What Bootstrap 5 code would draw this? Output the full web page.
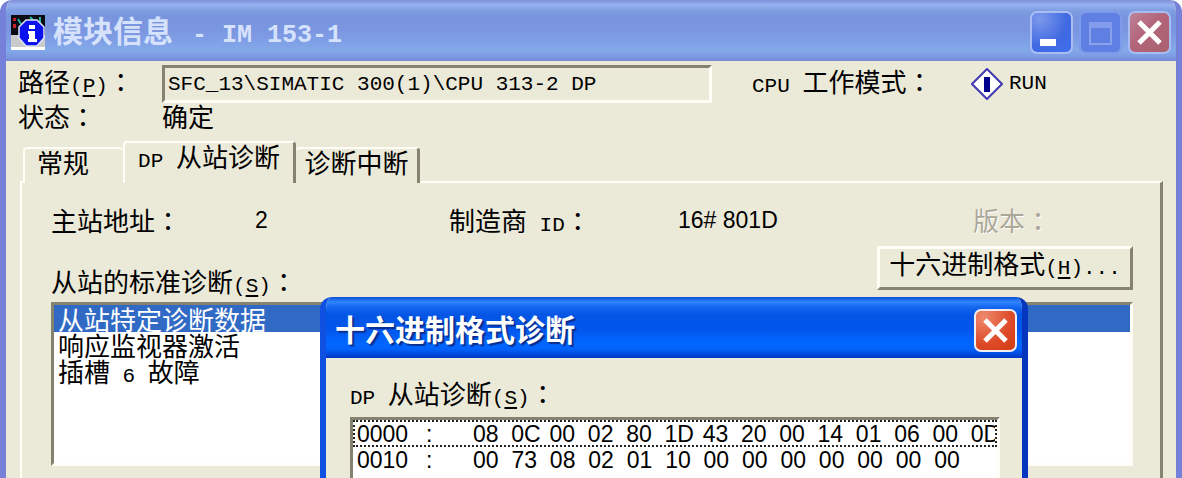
<!DOCTYPE html>
<html lang="zh-CN">
<head>
<meta charset="utf-8">
<meta name="viewport" content="width=device-width, initial-scale=1">
<title>模块信息 - IM 153-1</title>
<link href="https://cdn.jsdelivr.net/npm/bootstrap@5.3.0/dist/css/bootstrap.min.css" rel="stylesheet">
<style>
  :root { --face: #ebe9d8; --shade: #85826f; --lite: #fffef6; }
  body { background: #fff; color: #000; font: 26px/26px "Noto Sans CJK SC", sans-serif; }
  .en { font-family: "Liberation Mono", monospace; font-size: 21px; white-space: pre; }
  .num { font-family: "Liberation Sans", sans-serif; font-size: 23px; }
  .cn { font-family: "Noto Sans CJK TC", sans-serif; }
  u { text-underline-offset: 3px; text-decoration-thickness: 2px; }

  .win { min-height: 100vh; background: var(--face); border: 0 solid #7581d8; border-width: 0 6px; border-radius: 12px 12px 0 0; }
  .win-bar { height: 61px; margin: 0 -6px; padding: 4px 11px 0 11px; border-radius: 12px 12px 0 0;
    background: linear-gradient(#7f8fd8 0, #97b3f0 5px, #7f9fe2 10px, #7895de 16px, #7b96e0 30px, #7f9ee6 40px, #83a9e8 50px, #7e9ce4 56px, #7488d6 61px); }
  .bar-text { font-size: 30px; line-height: 36px; font-weight: 700; white-space: pre; }
  .bar-text .en { font-size: 25px; margin-left: 4px; }
  .win-bar .bar-text { color: #d6e2fb; }
  .caps { gap: 6px; }
  .cap { width: 43px; height: 43px; padding: 0; border: 2px solid #a9bdf3; border-radius: 7px; display: flex; }
  .cap svg { width: 100%; height: 100%; }
  .cap-min { background: radial-gradient(circle at 20% 15%, #7d99ec, #4069e2 60%, #3f70ee); }
  .cap-max { background: #5f7fe2; border-color: #7f9aea; }
  .cap-x { background: linear-gradient(135deg, #bd8297, #b36579 45%, #a9616f); }

  .path-label { width: 144px; }
  .path-box { height: 38px; padding: 0 3px; border: 3px solid; border-color: var(--shade) var(--lite) var(--lite) var(--shade); border-radius: 0; background: transparent; color: #000; margin-right: 40px; }
  .mode-label { width: 219px; }
  .mode-value { width: 205px; }
  .run-icon { width: 32px; height: 32px; margin-right: 6px; }

  .tabs { padding-left: 17px; height: 41px; margin-top: 13px; position: relative; z-index: 1; }
  .tab { height: 36px; padding: 0 12px 8px; border: 0 solid var(--lite); border-top-width: 2px; border-radius: 4px 4px 0 0; background: var(--face); color: #000; font: inherit; white-space: nowrap; }
  .tab-first { border-left-width: 2px; width: 100px; text-align: left; }
  .tab-on { height: 42px; width: 173px; padding-bottom: 9px; border-left-width: 2px; border-right: 3px solid var(--shade); }
  .tab-last { width: 124px; padding: 0 8px 8px; border-right: 3px solid var(--shade); }
  .pane { margin: -2px 13px 0 14px; padding: 24px 27px 0 29px; border: 2px solid var(--lite); border-right: 3px solid var(--shade); border-bottom: 0; }
  .facts { display: grid; grid-template-columns: 204px 194px 229px 1fr 160px; }
  .ver { color: #aca899; text-shadow: 1px 1px 0 #fff; }
  .hex-btn { width: 256px; height: 44px; padding: 0 0 4px; border: 3px solid; border-color: var(--lite) var(--shade) var(--shade) var(--lite); border-radius: 0; background: var(--face); color: #000; font: inherit; margin: 7px 0 10px; white-space: nowrap; }
  .sunk { background: #fff; border: 3px solid; border-color: var(--shade) var(--lite) var(--lite) var(--shade); border-radius: 0; }
  .diag-list { height: 164px; margin-top: 2px; }
  .diag-list button { border: 0; background: transparent; text-align: left; padding: 0 4px; height: 26px; color: #000; font: inherit; }
  .diag-list button.sel { background: #316ac5; color: #fff; height: 27px; }

  /* Modal lying over the module window */
  .dlg { position: absolute; top: 297px; left: 314px; right: 148px; bottom: 0; overflow: hidden; background: var(--face); border: 0 solid #0f50e0; border-width: 0 6px; border-right-color: #0437bd; border-radius: 12px 12px 0 0; }
  .dlg-bar { height: 61px; margin: 0 -6px; padding: 5px 11px 0 15px;
    background: linear-gradient(#0a50d4 0, #2f86ff 5px, #1567f0 10px, #0455e4 18px, #0256ec 32px, #0166ff 46px, #0263fc 52px, #003fd0 59px, #0038c0 61px); }
  .dlg-bar .bar-text { color: #fff; text-shadow: 2px 2px 1px #0a2f90; }
  .dlg .cap { border-color: #f3eef2; }
  .dlg .cap-x { background: radial-gradient(circle at 20% 15%, #ee8a6c, #dd4a28 60%, #d23c10); }
  .dlg-main { padding: 22px 22px 0 24px; }
  .dlg-label { height: 34px; }
  .hex-list { height: 150px; margin-top: 3px; }
  .hex-row { height: 26px; padding-left: 4px; overflow: hidden; }
  .hex-row.focus { border: 2px dotted #222; height: 27px; padding-left: 2px; }
  .hex-addr { width: 69px; flex: none; }
  .hex-sep { width: 47px; flex: none; }
  .hex-bytes { display: grid; grid-template-columns: repeat(14, 1fr); margin-right: -14px; }
</style>
</head>
<body>
<main class="win position-relative overflow-hidden d-flex flex-column">
  <header class="win-bar d-flex align-items-center">
    <svg width="34" height="35" viewBox="0 0 34 35" aria-hidden="true">
      <path d="M0 0h34v20H0z" fill="#080b12"/><path d="M0 20h34v14H0z" fill="#c9cac9"/><path d="M0 32h34v3H0z" fill="#fff"/>
      <path d="M2 3h3v3H2zm0 6h3v4H2z" fill="#c4202c"/><path d="M7 4l3 5m9-7l4 4m6-4v7" stroke="#23b4a8" stroke-width="2"/>
      <path d="M15 5h11l7 7v11l-7 8H15l-7-8V12z" fill="#0b12ef" stroke="#dfe5f6" stroke-width="1.5"/>
      <path d="M18 10h6v4h-6zm-1 6h7v8h2v3h-9v-3h1v-5h-1z" fill="#fff"/>
    </svg>
    <h1 class="bar-text mb-0 ms-2">模块信息<span class="en"> - IM 153-1</span></h1>
    <div class="caps d-flex ms-auto">
      <button class="cap cap-min" type="button" aria-label="最小化"><svg viewBox="0 0 39 39"><path d="M8 26h16v7H8z" fill="#fff"/></svg></button>
      <button class="cap cap-max" type="button" aria-label="最大化" disabled><svg viewBox="0 0 39 39"><path d="M9 10h21v21H9z" fill="none" stroke="#8aa2ee" stroke-width="2"/><path d="M8 9h23v6H8z" fill="#839cec"/></svg></button>
      <button class="cap cap-x" type="button" aria-label="关闭"><svg viewBox="0 0 39 39"><path d="M9 9l21 21M30 9L9 30" stroke="#fff" stroke-width="5"/></svg></button>
    </div>
  </header>

  <div class="d-flex align-items-center ps-2 ms-1 pt-1">
    <label class="path-label" for="path">路径<span class="en">(<u>P</u>)</span><span class="cn" lang="zh-TW">：</span></label>
    <input class="path-box en flex-grow-1" id="path" readonly value="SFC_13\SIMATIC 300(1)\CPU 313-2 DP">
    <span class="mode-label"><span class="en">CPU </span>工作模式<span class="cn" lang="zh-TW">：</span></span>
    <span class="mode-value d-flex align-items-center">
      <svg class="run-icon" viewBox="0 0 32 32" aria-hidden="true"><path d="M16 1l15 15-15 15L1 16z" fill="#fff" stroke="#4038b0" stroke-width="2"/><path d="M13 9h6v15h-6z" fill="#00008c"/></svg><span class="en">RUN</span>
    </span>
  </div>
  <div class="d-flex ps-2 ms-1"><span class="path-label">状态<span class="cn" lang="zh-TW">：</span></span><span>确定</span></div>

  <nav class="tabs d-flex align-items-end" role="tablist">
    <button class="tab tab-first" type="button" role="tab">常规</button>
    <button class="tab tab-on" type="button" role="tab" aria-selected="true"><span class="en">DP </span>从站诊断</button>
    <button class="tab tab-last" type="button" role="tab">诊断中断</button>
  </nav>

  <section class="pane flex-grow-1">
    <div class="facts">
      <span>主站地址<span class="cn" lang="zh-TW">：</span></span><span class="num">2</span>
      <span>制造商<span class="en"> ID</span><span class="cn" lang="zh-TW">：</span></span><span class="num">16# 801D</span>
      <span class="ver">版本<span class="cn" lang="zh-TW">：</span></span>
    </div>
    <div class="d-flex justify-content-between">
      <span class="align-self-end" id="std">从站的标准诊断<span class="en">(<u>S</u>)</span><span class="cn" lang="zh-TW">：</span></span>
      <button class="hex-btn" type="button">十六进制格式<span class="en">(<u>H</u>)...</span></button>
    </div>
    <div class="diag-list sunk d-flex flex-column" role="listbox" aria-labelledby="std">
      <button class="sel" type="button" role="option" aria-selected="true">从站特定诊断数据</button>
      <button type="button" role="option">响应监视器激活</button>
      <button type="button" role="option">插槽<span class="en"> 6 </span>故障</button>
    </div>
  </section>

  <section class="dlg" role="dialog" aria-labelledby="dlgTitle">
    <header class="dlg-bar d-flex align-items-center">
      <h2 class="bar-text mb-1" id="dlgTitle">十六进制格式诊断</h2>
      <button class="cap cap-x ms-auto" type="button" aria-label="关闭"><svg viewBox="0 0 39 39"><path d="M9 9l21 21M30 9L9 30" stroke="#fff" stroke-width="5"/></svg></button>
    </header>
    <div class="dlg-main">
      <div class="dlg-label" id="dp"><span class="en">DP </span>从站诊断<span class="en">(<u>S</u>)</span><span class="cn" lang="zh-TW">：</span></div>
      <div class="hex-list sunk num" role="listbox" aria-labelledby="dp">
        <div class="hex-row focus d-flex align-items-center" role="option" aria-selected="true">
          <span class="hex-addr">0000</span><span class="hex-sep">:</span>
          <span class="hex-bytes flex-grow-1"><span>08</span><span>0C</span><span>00</span><span>02</span><span>80</span><span>1D</span><span>43</span><span>20</span><span>00</span><span>14</span><span>01</span><span>06</span><span>00</span><span>0D</span></span>
        </div>
        <div class="hex-row d-flex align-items-center" role="option">
          <span class="hex-addr">0010</span><span class="hex-sep">:</span>
          <span class="hex-bytes flex-grow-1"><span>00</span><span>73</span><span>08</span><span>02</span><span>01</span><span>10</span><span>00</span><span>00</span><span>00</span><span>00</span><span>00</span><span>00</span><span>00</span></span>
        </div>
      </div>
    </div>
  </section>
</main>
<script src="https://cdn.jsdelivr.net/npm/bootstrap@5.3.0/dist/js/bootstrap.bundle.min.js"></script>
</body>
</html>
